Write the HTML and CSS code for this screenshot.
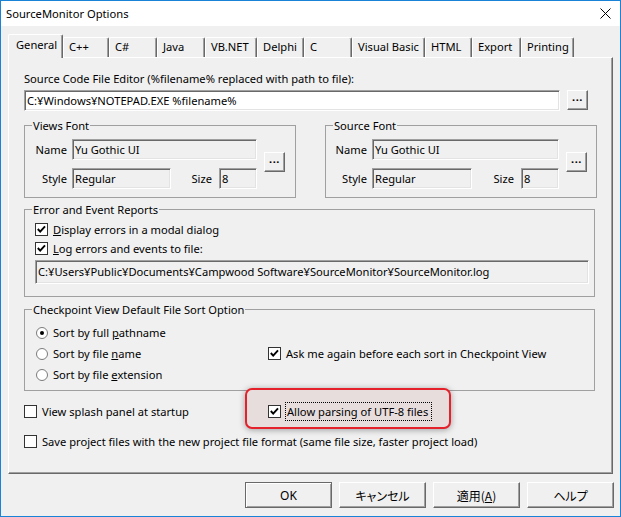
FILE: index.html
```html
<!DOCTYPE html>
<html>
<head>
<meta charset="utf-8">
<title>SourceMonitor Options</title>
<link rel="stylesheet" href="styles.css">
</head>
<body>
<div class="window">
  <div class="titlebar">
    <span class="title">SourceMonitor Options</span>
    <span class="close"><svg width="11" height="11" viewBox="0 0 11 11"><path d="M0.5 0.5L10.5 10.5M10.5 0.5L0.5 10.5" stroke="#000" stroke-width="1" fill="none"/></svg></span>
  </div>
  <div class="body">
    <div class="tabs">
      <div class="tab sel t1">General</div>
      <div class="tab t2">C++</div>
      <div class="tab t3">C#</div>
      <div class="tab t4">Java</div>
      <div class="tab t5">VB.NET</div>
      <div class="tab t6">Delphi</div>
      <div class="tab t7">C</div>
      <div class="tab t8">Visual Basic</div>
      <div class="tab t9">HTML</div>
      <div class="tab t10">Export</div>
      <div class="tab t11">Printing</div>
    </div>
    <div class="panel">
      <div class="lbl">Source Code File Editor (%filename% replaced with path to file):</div>
      <div class="editor-row">
        <div class="edit white editor">C:¥Windows¥NOTEPAD.EXE %filename%</div>
        <div class="btn dots">...</div>
      </div>

      <div class="font-row">
        <div class="group fontgroup views">
          <div class="legend">Views Font</div>
          <div class="fbody">
            <div class="ffields">
              <div class="frow"><span class="flabel">Name</span><div class="edit ro fname">Yu Gothic UI</div></div>
              <div class="frow"><span class="flabel">Style</span><div class="edit ro fstyle">Regular</div><span class="slabel">Size</span><div class="edit ro fsize">8</div></div>
            </div>
            <div class="btn dots fbtn">...</div>
          </div>
        </div>
        <div class="group fontgroup source">
          <div class="legend">Source Font</div>
          <div class="fbody">
            <div class="ffields">
              <div class="frow"><span class="flabel">Name</span><div class="edit ro fname">Yu Gothic UI</div></div>
              <div class="frow"><span class="flabel">Style</span><div class="edit ro fstyle">Regular</div><span class="slabel">Size</span><div class="edit ro fsize">8</div></div>
            </div>
            <div class="btn dots fbtn">...</div>
          </div>
        </div>
      </div>

      <div class="group errgroup">
        <div class="legend">Error and Event Reports</div>
        <div class="ebody">
          <div class="check erow">
            <svg class="cb" width="13" height="13" viewBox="0 0 13 13"><rect x="0.5" y="0.5" width="12" height="12" fill="#fff" stroke="#333"/><polyline points="2.8,6 5.2,8.6 10,3.4" fill="none" stroke="#000" stroke-width="1.9"/></svg>
            <span><u>D</u>isplay errors in a modal dialog</span>
          </div>
          <div class="check erow">
            <svg class="cb" width="13" height="13" viewBox="0 0 13 13"><rect x="0.5" y="0.5" width="12" height="12" fill="#fff" stroke="#333"/><polyline points="2.8,6 5.2,8.6 10,3.4" fill="none" stroke="#000" stroke-width="1.9"/></svg>
            <span><u>L</u>og errors and events to file:</span>
          </div>
          <div class="edit ro pathfield">C:¥Users¥Public¥Documents¥Campwood Software¥SourceMonitor¥SourceMonitor.log</div>
        </div>
      </div>

      <div class="group cpgroup">
        <div class="legend">Checkpoint View Default File Sort Option</div>
        <div class="cpbody">
          <div class="check">
            <svg class="rb" width="12" height="12" viewBox="0 0 12 12"><circle cx="6" cy="6" r="5.5" fill="#fff" stroke="#7a7a7a"/><circle cx="6" cy="6" r="2" fill="#000"/></svg>
            <span>Sort by full <u>p</u>athname</span>
          </div>
          <div></div>
          <div class="check">
            <svg class="rb" width="12" height="12" viewBox="0 0 12 12"><circle cx="6" cy="6" r="5.5" fill="#fff" stroke="#7a7a7a"/></svg>
            <span>Sort by file <u>n</u>ame</span>
          </div>
          <div class="check">
            <svg class="cb" width="13" height="13" viewBox="0 0 13 13"><rect x="0.5" y="0.5" width="12" height="12" fill="#fff" stroke="#333"/><polyline points="2.8,6 5.2,8.6 10,3.4" fill="none" stroke="#000" stroke-width="1.9"/></svg>
            <span>Ask me again before each sort in Checkpoint View</span>
          </div>
          <div class="check">
            <svg class="rb" width="12" height="12" viewBox="0 0 12 12"><circle cx="6" cy="6" r="5.5" fill="#fff" stroke="#7a7a7a"/></svg>
            <span>Sort by file <u>e</u>xtension</span>
          </div>
        </div>
      </div>

      <div class="opts-row first">
        <div class="check">
          <svg class="cb" width="13" height="13" viewBox="0 0 13 13"><rect x="0.5" y="0.5" width="12" height="12" fill="#fff" stroke="#333"/></svg>
          <span>View splash panel at startup</span>
        </div>
        <div class="check allow">
          <div class="highlight"></div>
          <svg class="cb" width="13" height="13" viewBox="0 0 13 13"><rect x="0.5" y="0.5" width="12" height="12" fill="#fff" stroke="#333"/><polyline points="2.8,6 5.2,8.6 10,3.4" fill="none" stroke="#000" stroke-width="1.9"/></svg>
          <span class="focus">Allow parsing of UTF-8 files</span>
        </div>
      </div>
      <div class="opts-row second">
        <div class="check">
          <svg class="cb" width="13" height="13" viewBox="0 0 13 13"><rect x="0.5" y="0.5" width="12" height="12" fill="#fff" stroke="#333"/></svg>
          <span>Save project files with the new project file format (same file size, faster project load)</span>
        </div>
      </div>
    </div>

    <div class="buttons">
      <div class="btn push default">OK</div>
      <div class="btn push jp">キャンセル</div>
      <div class="btn push jp">適用(<u>A</u>)</div>
      <div class="btn push jp">ヘルプ</div>
    </div>
  </div>
</div>
</body>
</html>
```

FILE: styles.css
```css
* { box-sizing: border-box; }
html, body { margin: 0; padding: 0; }
body {
  width: 621px;
  height: 517px;
  overflow: hidden;
  background: #f0f0f0;
  font-family: "Noto Sans", "Open Sans", sans-serif;
  font-size: 11.15px;
  color: #000;
}
u { text-decoration: underline; text-underline-offset: 1px; }

.window {
  width: 621px;
  height: 517px;
  border: 1px solid #1883d7;
  background: #f0f0f0;
  display: flex;
  flex-direction: column;
}

.titlebar {
  height: 25px;
  background: #fff;
  display: flex;
  align-items: center;
  justify-content: space-between;
  padding: 0 9px 0 5px;
  font-size: 11.2px;
  flex: none;
}
.close svg { display: block; }

.body { padding: 8px 7px 0 7px; }

/* tabs */
.tabs {
  display: flex;
  align-items: flex-end;
  height: 23px;
}
.tab {
  height: 20px;
  border-top: 1px solid #fff;
  border-left: 1px solid #fff;
  border-right: 1px solid #696969;
  box-shadow: inset -1px 0 #a0a0a0;
  border-top-left-radius: 2px;
  border-top-right-radius: 2px;
  padding: 1px 0 0 5px;
  line-height: 16px;
  white-space: nowrap;
  background: #f0f0f0;
}
.tab.sel {
  height: 24px;
  margin-bottom: -1px;
  padding: 2px 0 0 7px;
  position: relative;
  z-index: 1;
}
.t1 { width: 55px; }
.t2 { width: 46px; }
.t3 { width: 48px; }
.t4 { width: 48px; }
.t5 { width: 52px; }
.t6 { width: 47px; }
.t7 { width: 48px; }
.t8 { width: 73px; }
.t9 { width: 47px; }
.t10 { width: 49px; }
.t11 { width: 53px; }

/* panel */
.panel {
  height: 417px;
  border: 1px solid;
  border-color: #fff #696969 #696969 #fff;
  box-shadow: inset -1px -1px #a0a0a0;
  padding: 13px 0 0 15px;
}
.lbl { line-height: 15px; white-space: nowrap; }

.edit {
  height: 21px;
  border: 1px solid;
  border-color: #a0a0a0 #fff #fff #a0a0a0;
  box-shadow: inset 1px 1px #696969, inset -1px -1px #e3e3e3;
  padding: 0 0 0 2px;
  line-height: 19px;
  white-space: nowrap;
  overflow: hidden;
  flex: none;
}
.edit.white { background: #fff; }

.btn {
  border: 1px solid;
  border-color: #fff #696969 #696969 #fff;
  box-shadow: inset -1px -1px #a0a0a0;
  background: #f0f0f0;
  flex: none;
}
.dots {
  width: 21px;
  height: 20px;
  display: flex;
  align-items: center;
  justify-content: center;
  font-weight: 700;
  font-size: 11px;
  line-height: 11px;
  letter-spacing: 0.5px;
  padding-bottom: 7px;
}

.editor-row {
  display: flex;
  align-items: flex-start;
  gap: 7px;
  margin-top: 4px;
}
.editor { width: 536px; }

/* font groups */
.group {
  border: 1px solid #a0a0a0;
  display: flex;
  flex-direction: column;
}
.legend {
  align-self: flex-start;
  margin: -8px 0 -7px 7px;
  padding: 0 1px;
  background: #f0f0f0;
  line-height: 15px;
  white-space: nowrap;
}

.font-row {
  display: flex;
  gap: 29px;
  margin-top: 14px;
}
.fontgroup { height: 73px; }
.views { width: 272px; }
.source { width: 272px; }

.fbody {
  display: flex;
  align-items: center;
  padding: 13px 0 8px 0;
}
.ffields {
  display: flex;
  flex-direction: column;
  gap: 8px;
}
.frow {
  display: flex;
  align-items: center;
  height: 21px;
}
.flabel {
  text-align: right;
  padding-right: 5px;
  flex: none;
}
.views .flabel { width: 47px; }
.source .flabel { width: 46px; }
.slabel {
  text-align: right;
  padding-right: 7px;
  flex: none;
}
.views .fname { width: 185px; }
.views .fstyle { width: 99px; }
.views .slabel { width: 48px; }
.source .fname { width: 187px; }
.source .fstyle { width: 100px; }
.source .slabel { width: 49px; }
.fsize { width: 38px; }
.fbtn { margin-left: 7px; margin-bottom: 5px; }

/* error group */
.errgroup {
  width: 571px;
  height: 88px;
  margin-top: 11px;
}
.ebody { padding: 10px 5px 0 10px; }
.check {
  display: flex;
  align-items: center;
  gap: 5px;
  white-space: nowrap;
}
.check svg { display: block; flex: none; }
.erow { height: 19px; }
.pathfield {
  height: 24px;
  margin-top: 2px;
  line-height: 22px;
}

/* checkpoint group */
.cpgroup {
  width: 571px;
  height: 82px;
  margin-top: 12px;
}
.cpbody {
  display: grid;
  grid-template-columns: 232px auto;
  grid-template-rows: 21px 21px 21px;
  padding: 12px 0 0 11px;
}

/* bottom options */
.opts-row {
  display: grid;
  grid-template-columns: 244px auto;
  height: 21px;
}
.opts-row.first { margin-top: 10px; }
.opts-row.second { margin-top: 9px; }
.allow { position: relative; gap: 4px; }
.allow svg, .allow .focus { position: relative; z-index: 1; }
.highlight {
  position: absolute;
  left: -23px;
  top: -13px;
  width: 206px;
  height: 41px;
  border: 2px solid #e5222b;
  border-radius: 7px;
  background: #e8dddd;
  box-shadow: 0 1px 6px rgba(0, 0, 0, 0.35);
  z-index: 0;
}
.focus {
  border: 1px dotted #000;
  padding: 0 3px 0 1px;
  line-height: 17px;
}

/* bottom buttons */
.buttons {
  display: flex;
  justify-content: flex-end;
  gap: 7px;
  margin-top: 8px;
  margin-right: -1px;
}
.push {
  width: 87px;
  height: 26px;
  display: flex;
  align-items: center;
  justify-content: center;
  font-size: 12px;
}
.push.default {
  border: 1px solid #696969;
  box-shadow: inset 1px 1px #fff, inset -1px -1px #a0a0a0;
}
.jp {
  font-family: "Noto Sans CJK JP", "Noto Sans", sans-serif;
  font-feature-settings: "palt";
}
```
